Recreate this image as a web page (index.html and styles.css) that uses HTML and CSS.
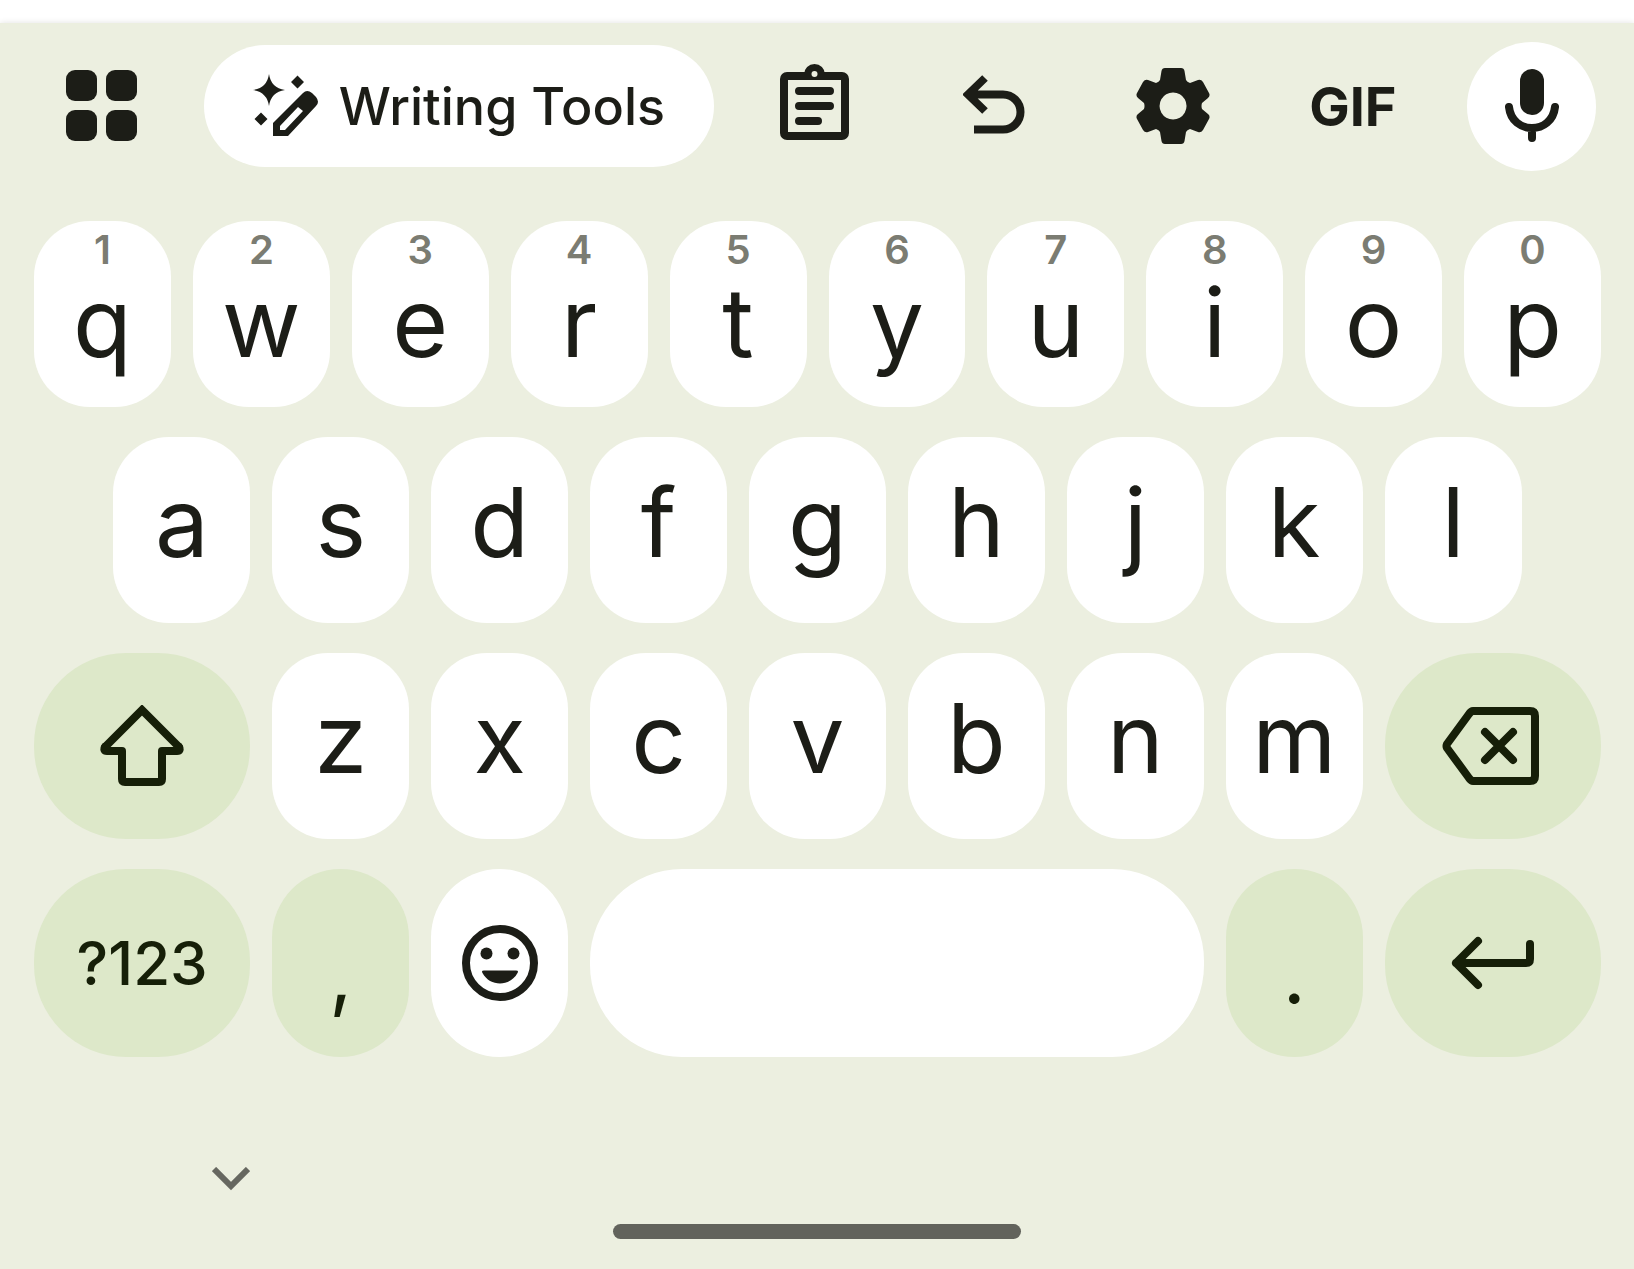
FILE: index.html
```html
<!DOCTYPE html>
<html lang="en">
<head>
    <meta charset="UTF-8">
    <meta name="viewport" content="width=device-width, initial-scale=1.0">
    <title>Keyboard</title>
    <link rel="stylesheet" href="styles.css">
</head>
<body>

    <main class="keyboard">
        <!-- Toolbar -->
        <div class="toolbar">
            <button class="tool" aria-label="More tools">
                <svg width="71" height="72" viewBox="0 0 71 72">
                    <rect x="0" y="0" width="31" height="31" rx="9"/>
                    <rect x="40" y="0" width="31" height="31" rx="9"/>
                    <rect x="0" y="40" width="31" height="31" rx="9"/>
                    <rect x="40" y="40" width="31" height="31" rx="9"/>
                </svg>
            </button>
            <button class="tool writing-tools">
                <svg width="66" height="66" viewBox="0 0 66 66">
                    <path d="M16 1Q18 15 32 17Q18 19 16 33Q14 19 0 17Q14 15 16 1Z"/>
                    <path d="M44.500 2.500L51 9L44.500 15.500L38 9ZM8 39.500L14.500 46L8 52.500L1.500 46Z"/>
                    <path fill-rule="evenodd" d="M20 50L50 20Q54 16 59 20L63 24Q67 29 63 33L35 63H20ZM27 53V57H32L50 38L45 34Z"/>
                </svg>
                <span>Writing Tools</span>
            </button>
            <button class="tool" aria-label="Clipboard">
                <svg class="line" width="72" height="84" viewBox="0 0 72 84">
                    <rect x="4" y="12" width="61" height="60" rx="3"/>
                    <path d="M19 27H50M19 42H50M19 57H38"/>
                    <path class="solid" d="M24 13V10.500A10.500 10.500 0 0 1 45 10.500V13Z"/>
                    <circle class="hole" cx="34.500" cy="10" r="3"/>
                </svg>
            </button>
            <button class="tool" aria-label="Undo">
                <svg class="line butt" width="64" height="62" viewBox="0 0 64 62">
                    <path d="M22 3L5 19.500L22 36M5 19.500H40A17.500 17.500 0 0 1 40 54.500H11"/>
                </svg>
            </button>
            <button class="tool" aria-label="Settings">
                <svg width="76" height="78" viewBox="0 0 76 78">
                    <path fill-rule="evenodd" d="M29 1H45Q48 1 48.500 4L50 13Q51 15 54 16L62 13Q65 12 67 15L73 26Q74.500 29 72 31L66 36Q65 39 66 42L72 47Q74.500 49 73 52L67 63Q65 66 62 65L54 62Q51 63 50 65L48.500 74Q48 77 45 77H29Q26 77 25.500 74L24 65Q23 63 20 62L12 65Q9 66 7 63L1 52Q-.5 49 2 47L8 42Q9 39 8 36L2 31Q-.5 29 1 26L7 15Q9 12 12 13L20 16Q23 15 24 13L25.500 4Q26 1 29 1ZM37 25.500a13.500 13.500 0 1 0 .1 0Z"/>
                </svg>
            </button>
            <button class="tool gif">GIF</button>
            <button class="tool mic" aria-label="Voice typing">
                <svg class="line" width="54" height="74" viewBox="0 0 54 74">
                    <rect class="solid" x="15" y="0" width="24" height="46" rx="12"/>
                    <path d="M4 38C7 66 47 66 50 38M27 59V69"/>
                </svg>
            </button>
        </div>

        <!-- Keys, every row is a grid of 20 half-key columns -->
        <div class="keys">
            <div class="row">
                <button class="key"><span class="hint">1</span>q</button>
                <button class="key"><span class="hint">2</span>w</button>
                <button class="key"><span class="hint">3</span>e</button>
                <button class="key"><span class="hint">4</span>r</button>
                <button class="key"><span class="hint">5</span>t</button>
                <button class="key"><span class="hint">6</span>y</button>
                <button class="key"><span class="hint">7</span>u</button>
                <button class="key"><span class="hint">8</span>i</button>
                <button class="key"><span class="hint">9</span>o</button>
                <button class="key"><span class="hint">0</span>p</button>
            </div>
            <div class="row row-home">
                <button class="key">a</button>
                <button class="key">s</button>
                <button class="key">d</button>
                <button class="key">f</button>
                <button class="key">g</button>
                <button class="key">h</button>
                <button class="key">j</button>
                <button class="key">k</button>
                <button class="key">l</button>
            </div>
            <div class="row">
                <button class="key wide tinted" aria-label="Shift">
                    <svg class="line" width="86" height="82" viewBox="0 0 86 82">
                        <path class="miter" d="M6 42L43 5L80 42"/>
                        <path d="M80 42Q82 46 78 46H63V74Q63 77 60 77H26Q23 77 23 74V46H8Q4 46 6 42"/>
                    </svg>
                </button>
                <button class="key">z</button>
                <button class="key">x</button>
                <button class="key">c</button>
                <button class="key">v</button>
                <button class="key">b</button>
                <button class="key">n</button>
                <button class="key">m</button>
                <button class="key wide tinted" aria-label="Backspace">
                    <svg class="line" width="102" height="80" viewBox="0 0 102 80">
                        <path d="M31 5H88Q93 5 93 10V70Q93 75 88 75H31Q29 75 27 72L5 42Q4 40 5 38L27 8Q29 5 31 5Z"/>
                        <path d="M43 26L71 54M71 26L43 54"/>
                    </svg>
                </button>
            </div>
            <div class="row row-bottom">
                <button class="key wide tinted symbols">?123</button>
                <button class="key tinted punct">,</button>
                <button class="key emoji" aria-label="Emoji">
                    <svg class="line" width="76" height="76" viewBox="0 0 76 76">
                        <circle cx="38" cy="38" r="34"/>
                        <circle class="solid" cx="24.500" cy="28.500" r="6"/>
                        <circle class="solid" cx="51.500" cy="28.500" r="6"/>
                        <path class="solid" d="M22 45.500H54Q57 45.500 55.500 48C48 62 28 62 20.500 48Q19 45.500 22 45.500Z"/>
                    </svg>
                </button>
                <button class="key space" aria-label="Space"></button>
                <button class="key tinted punct">.</button>
                <button class="key wide tinted" aria-label="Enter">
                    <svg class="line" width="86" height="54" viewBox="0 0 86 54">
                        <path d="M28 5L6 27L28 49M6 27H76Q80 27 80 23V8"/>
                    </svg>
                </button>
            </div>
        </div>

        <!-- System navigation -->
        <div class="nav">
            <button class="hide" aria-label="Hide keyboard">
                <svg width="38" height="24" viewBox="0 0 38 24">
                    <path d="M2 2L19 19L36 2"/>
                </svg>
            </button>
            <div class="home-bar"></div>
        </div>
    </main>

</body>
</html>
```
FILE: styles.css
```css
* {
    box-sizing: border-box;
}

body {
    margin: 0;
    padding-top: 23px;
    min-height: 100vh;
    display: flex;
    flex-direction: column;
    background-color: #fff;
    color: #1c1d17;
    font-family: Inter, sans-serif;
}

.keyboard {
    flex: 1;
    background-color: #ecefe0;
    box-shadow: 0 0 6px rgba(0, 0, 0, 0.12);
}

button {
    margin: 0;
    padding: 0;
    border: none;
    background: none;
    color: inherit;
    font: inherit;
    cursor: pointer;
}

svg {
    display: block;
    fill: currentColor;
}

/* Outline icons */
.line {
    fill: none;
    stroke: currentColor;
    stroke-width: 8px;
    stroke-linecap: round;
    stroke-linejoin: round;
}

.line .solid {
    fill: currentColor;
    stroke: none;
}

.line .hole {
    fill: #ecefe0;
    stroke: none;
}

.line.butt {
    stroke-linecap: butt;
    stroke-linejoin: miter;
}

.line .miter {
    stroke-linejoin: miter;
}

/* Toolbar */
.toolbar {
    display: grid;
    grid-template-columns: repeat(9, 1fr);
    align-items: center;
    justify-items: center;
    height: 166px;
    padding: 0 13px 0 12px;
}

.tool {
    display: flex;
    align-items: center;
    justify-content: center;
}

.writing-tools {
    grid-column: span 3;
    width: 95%;
    height: 122px;
    gap: 20px;
    border-radius: 61px;
    background-color: #fff;
    font-size: 52px;
    font-weight: 500;
    white-space: nowrap;
}

.gif {
    font-size: 54px;
    font-weight: 700;
}

.mic {
    width: 129px;
    height: 129px;
    border-radius: 50%;
    background-color: #fff;
}

/* Keys */
.keys {
    display: grid;
    gap: 30px;
    padding: 32px 33px 0 34px;
}

.row {
    display: grid;
    grid-template-columns: repeat(20, 1fr);
    column-gap: 22px;
}

.key {
    grid-column: span 2;
    display: flex;
    flex-direction: column;
    align-items: center;
    height: 186px;
    padding-top: 32px;
    border-radius: 56px;
    background-color: #fff;
    font-size: 96px;
    line-height: 106px;
}

.key:has(.hint) {
    padding-top: 10px;
}

.hint {
    color: #7b7c72;
    font-size: 40px;
    font-weight: 600;
    line-height: 38px;
}

.row-home .key:first-child {
    grid-column: 2 / span 2;
}

.tinted {
    background-color: #dde8c9;
    color: #161f08;
}

.wide {
    grid-column: span 3;
    justify-content: center;
    padding-top: 0;
    border-radius: 92px;
}

.row-bottom .key {
    height: 188px;
    border-radius: 92px;
}

.symbols {
    font-size: 60px;
    font-weight: 500;
    line-height: 72px;
}

.punct {
    padding-top: 52px;
    font-size: 80px;
}

.emoji {
    justify-content: center;
    padding-top: 0;
}

.space {
    grid-column: span 8;
}

/* Bottom navigation */
.nav {
    padding: 110px 0 30px;
}

.hide {
    display: block;
    margin-left: 13%;
    color: #666760;
}

.hide svg {
    fill: none;
    stroke: currentColor;
    stroke-width: 6px;
}

.home-bar {
    width: 25%;
    height: 15px;
    margin: 33px auto 0;
    border-radius: 8px;
    background-color: #62635c;
}
```
